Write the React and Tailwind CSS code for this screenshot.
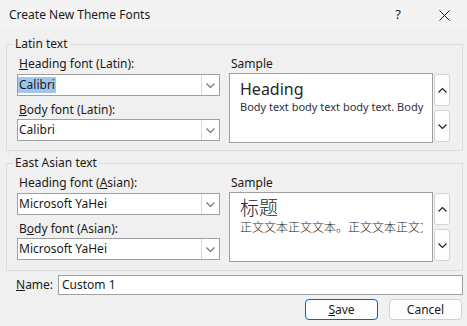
import React from 'react';

function Chevron({ up, className }) {
  return (
    <svg width="9" height="5" viewBox="0 0 9 5" className={className}>
      <path
        d={up ? 'M0.5 4.5 L4.5 0.5 L8.5 4.5' : 'M0.5 0.5 L4.5 4.5 L8.5 0.5'}
        fill="none"
        stroke="currentColor"
        strokeWidth="1.1"
      />
    </svg>
  );
}

function Combo({ value, selected }) {
  return (
    <div className="flex h-[22px] w-[203px] border border-[#a0a0a0] bg-white">
      <div className="flex flex-1 items-center">
        <span className={'px-[1px] leading-[16px] ' + (selected ? 'bg-[#9fc7ee]' : '')}>{value}</span>
      </div>
      <div className="flex w-[18px] items-center justify-center border-l border-[#d9d9d9] text-[#707070]">
        <Chevron />
      </div>
    </div>
  );
}

function Spin({ up }) {
  return (
    <div className="flex h-[32px] w-[16px] items-center justify-center rounded-[3px] border border-[#d3d3d3] bg-[#fdfdfd] text-[#1f1f1f]">
      <Chevron up={up} />
    </div>
  );
}

function Group({ title, headLabel, bodyLabel, headValue, bodyValue, selected, bottomPad, children }) {
  return (
    <fieldset className={'ml-[6px] mr-[4px] border border-[#dcdcdc] ' + bottomPad}>
      <legend className="ml-[6px] px-[2px] leading-[16px]">{title}</legend>
      <div className="flex items-start">
        <div className="flex flex-col pl-[10px] pt-[4px]">
          <div className="h-[16px] pl-[2px] leading-[16px]">{headLabel}</div>
          <div className="mt-[2px]">
            <Combo value={headValue} selected={selected} />
          </div>
          <div className="mt-[6px] h-[16px] pl-[2px] leading-[16px]">{bodyLabel}</div>
          <div className="mt-[1px]">
            <Combo value={bodyValue} />
          </div>
        </div>
        <div className="ml-[9px] flex flex-col pt-[4px]">
          <div className="h-[16px] pl-[2px] leading-[16px]">Sample</div>
          <div className="mt-[1px] flex items-start gap-[1px]">
            <div className="h-[70px] w-[204px] border border-[#a0a0a0] bg-white pl-[10px]">
              {children}
            </div>
            <div className="mt-[1px] flex flex-col gap-[4px]">
              <Spin up />
              <Spin />
            </div>
          </div>
        </div>
      </div>
    </fieldset>
  );
}

export default function App() {
  return (
    <div className="flex h-[326px] w-[467px] flex-col overflow-hidden bg-[#f0f0f0] font-['Noto_Sans',sans-serif] text-[12px] text-[#1a1a1a]">
      <div className="flex h-[30px] items-center bg-[#f3f3f3]">
        <div className="flex-1 pl-[9px]">Create New Theme Fonts</div>
        <div className="flex h-[30px] w-[46px] items-center justify-center text-[13px]">?</div>
        <div className="flex h-[30px] w-[46px] items-center justify-center">
          <svg width="11" height="11" viewBox="0 0 11 11">
            <path d="M0.5 0.5 L10.5 10.5 M10.5 0.5 L0.5 10.5" stroke="#1a1a1a" strokeWidth="1" fill="none" />
          </svg>
        </div>
      </div>

      <div className="mt-[6px]">
        <Group
          title="Latin text"
          headLabel={<><u>H</u>eading font (Latin):</>}
          bodyLabel={<><u>B</u>ody font (Latin):</>}
          headValue="Calibri"
          bodyValue="Calibri"
          selected
          bottomPad="pb-[7px]"
        >
          <div className="w-[184px] overflow-hidden whitespace-nowrap pt-[5px] text-[#262626]">
            <div className="text-[16px] leading-[20px]">Heading</div>
            <div className="mt-[1px] text-[11px] leading-[14px] text-[#30303a]">Body text body text body text. Body</div>
          </div>
        </Group>
      </div>

      <div className="mt-[4px]">
        <Group
          title="East Asian text"
          headLabel={<>Heading font (<u>A</u>sian):</>}
          bodyLabel={<>B<u>o</u>dy font (Asian):</>}
          headValue="Microsoft YaHei"
          bodyValue="Microsoft YaHei"
          bottomPad="pb-[8px]"
        >
          <div className="w-[183px] overflow-hidden whitespace-nowrap pt-[2px] font-['Noto_Sans_CJK_SC',sans-serif] font-light text-[#262626]">
            <div className="text-[19px] leading-[24px]">标题</div>
            <div className="text-[12px] leading-[16px]">正文文本正文文本。正文文本正文文</div>
          </div>
        </Group>
      </div>

      <div className="mt-[4px] flex items-center">
        <div className="w-[58px] pl-[16px]"><u>N</u>ame:</div>
        <div className="flex h-[20px] w-[405px] items-center border border-[#a0a0a0] bg-white pl-[3px]">Custom 1</div>
      </div>

      <div className="mt-[4px] flex justify-end gap-[11px] pr-[5px]">
        <button className="h-[21px] w-[73px] rounded-[4px] border border-[#0067c0] bg-[#fdfdfd] leading-[19px]">
          <u>S</u>ave
        </button>
        <button className="h-[21px] w-[73px] rounded-[4px] border border-[#d0d0d0] bg-[#fdfdfd] leading-[19px]">
          Cancel
        </button>
      </div>
    </div>
  );
}
